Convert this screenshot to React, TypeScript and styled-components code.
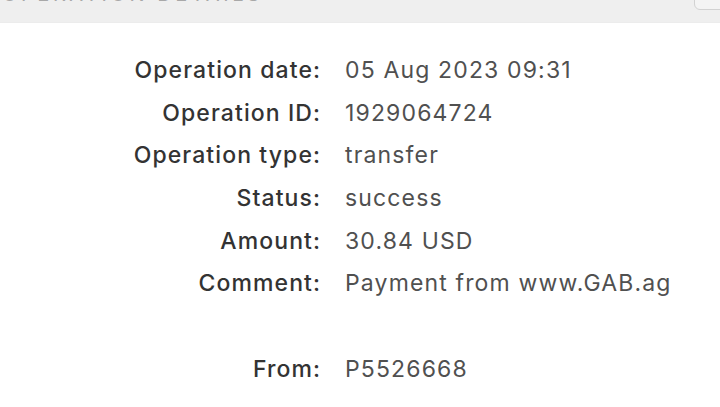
import styled, { createGlobalStyle } from 'styled-components'

const GlobalStyle = createGlobalStyle`
  html, body {
    margin: 0;
    padding: 0;
    background: #fff;
  }
  body {
    font-family: Inter, 'Open Sans', sans-serif;
    overflow: hidden;
  }
`

const rows: { label: string; value: string }[] = [
  { label: 'Operation date:', value: '05 Aug 2023 09:31' },
  { label: 'Operation ID:', value: '1929064724' },
  { label: 'Operation type:', value: 'transfer' },
  { label: 'Status:', value: 'success' },
  { label: 'Amount:', value: '30.84 USD' },
  { label: 'Comment:', value: 'Payment from www.GAB.ag' },
  { label: '', value: '' },
  { label: 'From:', value: 'P5526668' },
]

export default function App() {
  return (
    <Page>
      <GlobalStyle />
      <Header>
        <Title>OPERATION DETAILS</Title>
        <CloseButton>×</CloseButton>
      </Header>
      <Details>
        {rows.map((r, i) => (
          <Row key={i}>
            <Label>{r.label}</Label>
            <Value>{r.value}</Value>
          </Row>
        ))}
      </Details>
    </Page>
  )
}

const Page = styled.div`
  width: 720px;
  height: 407px;
  overflow: hidden;
`

const Header = styled.div`
  position: relative;
  display: flow-root;
  height: 23px;
  background: #efefef;
  border-bottom: 1px solid #ececec;
  box-sizing: border-box;
`

const Title = styled.div`
  margin-top: -16px;
  padding-left: 2px;
  font-size: 20px;
  line-height: 20px;
  letter-spacing: 3.6px;
  color: #a8a8a8;
`

const CloseButton = styled.div`
  position: absolute;
  top: -20px;
  right: -10px;
  width: 36px;
  height: 30px;
  box-sizing: border-box;
  border: 1px solid #d2d2d2;
  border-radius: 6px;
  background: #f4f4f4;
  color: #777;
  font-size: 18px;
  text-align: center;
`

const Details = styled.div`
  padding-top: 26px;
  display: grid;
  grid-template-columns: 320px 1fr;
  column-gap: 25px;
`

const Row = styled.div`
  display: contents;
`

const Label = styled.div`
  height: 42.7px;
  line-height: 42.7px;
  text-align: right;
  font-size: 23px;
  font-weight: 500;
  letter-spacing: 1.1px;
  margin-right: -1.1px;
  color: #333;
  white-space: nowrap;
`

const Value = styled.div`
  height: 42.7px;
  line-height: 42.7px;
  font-size: 23px;
  letter-spacing: 1.15px;
  color: #505050;
  white-space: nowrap;
`
